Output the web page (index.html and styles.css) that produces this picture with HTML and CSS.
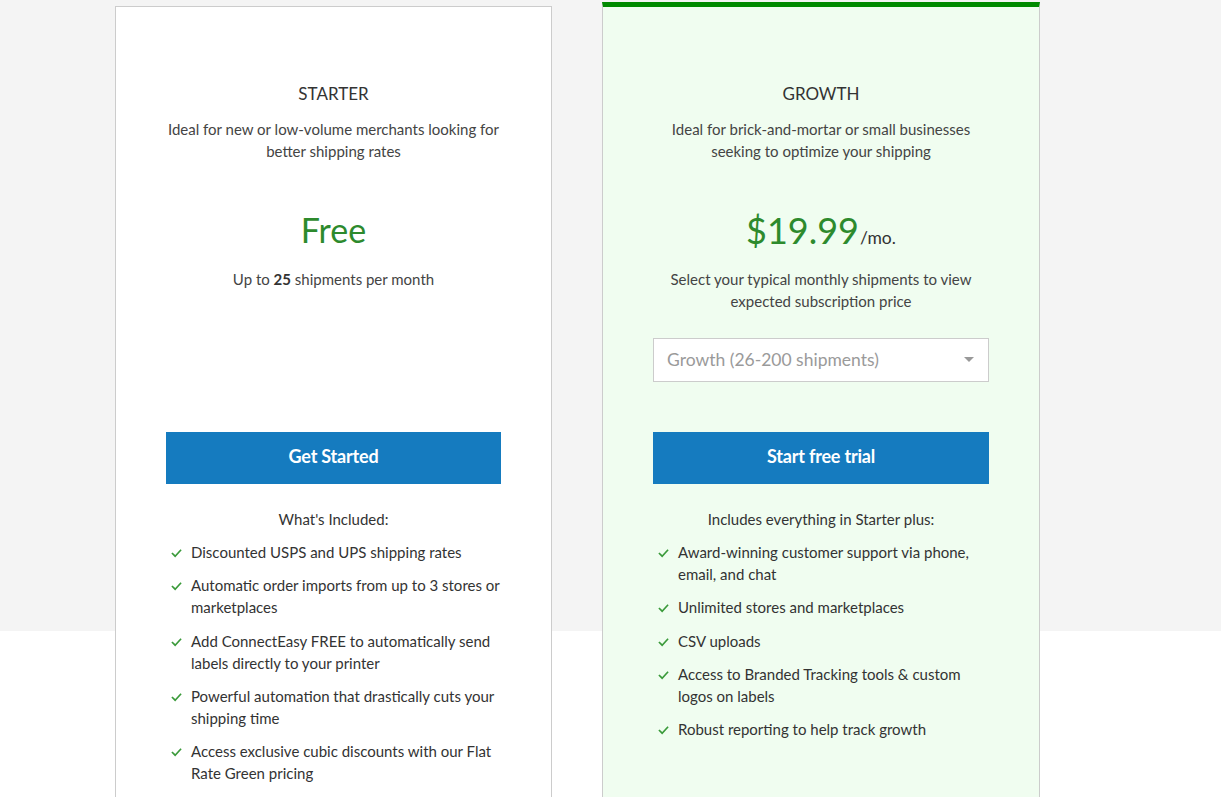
FILE: index.html
```html
<!DOCTYPE html>
<html lang="en">
<head>
<meta charset="utf-8">
<title>Pricing</title>
<link rel="stylesheet" href="styles.css">
</head>
<body>
<section class="pricing">
  <div class="cards">
    <article class="card">
      <div class="plan-top">
        <h2 class="plan-name">STARTER</h2>
        <p class="plan-desc">Ideal for new or low-volume merchants looking for better shipping rates</p>
        <div class="price"><span class="amount">Free</span></div>
        <p class="plan-note">Up to <strong>25</strong> shipments per month</p>
      </div>
      <a class="btn" href="#">Get Started</a>
      <p class="included">What's Included:</p>
      <ul class="features">
        <li><svg class="check" viewBox="0 0 12 10"><polyline points="1,5 4.5,8.5 11,1.5"/></svg><span>Discounted USPS and UPS shipping rates</span></li>
        <li><svg class="check" viewBox="0 0 12 10"><polyline points="1,5 4.5,8.5 11,1.5"/></svg><span>Automatic order imports from up to 3 stores or marketplaces</span></li>
        <li><svg class="check" viewBox="0 0 12 10"><polyline points="1,5 4.5,8.5 11,1.5"/></svg><span>Add ConnectEasy FREE to automatically send labels directly to your printer</span></li>
        <li><svg class="check" viewBox="0 0 12 10"><polyline points="1,5 4.5,8.5 11,1.5"/></svg><span>Powerful automation that drastically cuts your shipping time</span></li>
        <li><svg class="check" viewBox="0 0 12 10"><polyline points="1,5 4.5,8.5 11,1.5"/></svg><span>Access exclusive cubic discounts with our Flat Rate Green pricing</span></li>
      </ul>
    </article>
    <article class="card card-featured">
      <div class="plan-top">
        <h2 class="plan-name">GROWTH</h2>
        <p class="plan-desc">Ideal for brick-and-mortar or small businesses seeking to optimize your shipping</p>
        <div class="price"><span class="amount amount-big">$19.99</span><span class="per">/mo.</span></div>
        <p class="plan-note">Select your typical monthly shipments to view expected subscription price</p>
        <div class="select">
          <span class="select-value">Growth (26-200 shipments)</span>
          <span class="caret"></span>
        </div>
      </div>
      <a class="btn" href="#">Start free trial</a>
      <p class="included">Includes everything in Starter plus:</p>
      <ul class="features">
        <li><svg class="check" viewBox="0 0 12 10"><polyline points="1,5 4.5,8.5 11,1.5"/></svg><span>Award-winning customer support via phone, email, and chat</span></li>
        <li><svg class="check" viewBox="0 0 12 10"><polyline points="1,5 4.5,8.5 11,1.5"/></svg><span>Unlimited stores and marketplaces</span></li>
        <li><svg class="check" viewBox="0 0 12 10"><polyline points="1,5 4.5,8.5 11,1.5"/></svg><span>CSV uploads</span></li>
        <li><svg class="check" viewBox="0 0 12 10"><polyline points="1,5 4.5,8.5 11,1.5"/></svg><span>Access to Branded Tracking tools &amp; custom logos on labels</span></li>
        <li><svg class="check" viewBox="0 0 12 10"><polyline points="1,5 4.5,8.5 11,1.5"/></svg><span>Robust reporting to help track growth</span></li>
      </ul>
    </article>
  </div>
</section>
</body>
</html>
```

FILE: styles.css
```css
* { box-sizing: border-box; }

html, body {
  margin: 0;
  padding: 0;
  background: #ffffff;
  font-family: Lato, "Open Sans", "Liberation Sans", sans-serif;
  color: #333333;
  overflow: hidden;
}

.pricing {
  height: 797px;
  background: linear-gradient(to bottom, #f4f4f4 0, #f4f4f4 631px, #ffffff 631px);
  padding-top: 6px;
}

.cards {
  display: flex;
  gap: 50px;
  padding-left: 115px;
  align-items: flex-start;
}

.card {
  width: 437px;
  min-height: 820px;
  background: #ffffff;
  border: 1px solid #cccccc;
  padding: 0 50px;
  text-align: center;
}

.card-featured {
  width: 438px;
  background: #f0fdf0;
  border-top: 5px solid #008a00;
  margin-top: -4px;
}

.plan-top {
  height: 425px;
  padding-top: 75px;
}

.plan-name {
  margin: 0;
  font-size: 17px;
  line-height: 24px;
  font-weight: 400;
  color: #333333;
}

.plan-desc {
  margin: 12px 0 0;
  font-size: 15px;
  line-height: 22px;
  color: #444444;
}

.price {
  margin-top: 48px;
  height: 40px;
  display: flex;
  justify-content: center;
  align-items: baseline;
}

.amount {
  font-size: 34px;
  line-height: 40px;
  color: #2d8a2d;
}

.amount-big {
  font-size: 36px;
}

.per {
  font-size: 17.5px;
  color: #333333;
  margin-left: 1px;
}

.plan-note {
  margin: 18px 0 0;
  font-size: 15px;
  line-height: 22px;
  color: #444444;
}

.plan-note strong {
  font-weight: 700;
  color: #333333;
}

.select {
  margin-top: 26px;
  height: 44px;
  background: #ffffff;
  border: 1px solid #cccccc;
  display: flex;
  align-items: center;
  justify-content: space-between;
  padding: 0 14px 1px 13px;
}

.select-value {
  font-size: 17.5px;
  color: #9a9a9a;
}

.caret {
  width: 0;
  height: 0;
  border-left: 5px solid transparent;
  border-right: 5px solid transparent;
  border-top: 5px solid #999999;
}

.btn {
  display: flex;
  align-items: center;
  justify-content: center;
  height: 52px;
  padding-bottom: 4px;
  background: #157bbf;
  color: #ffffff;
  font-size: 18px;
  font-weight: 700;
  letter-spacing: -0.2px;
  text-decoration: none;
}

.included {
  margin: 24px 0 0;
  font-size: 15px;
  line-height: 22px;
  color: #333333;
}

.features {
  list-style: none;
  margin: 11px 0 0;
  padding: 0;
  text-align: left;
}

.features li {
  display: flex;
  align-items: flex-start;
  gap: 9px;
  font-size: 15px;
  line-height: 22px;
  color: #333333;
  margin-bottom: 11.3px;
}

.check {
  flex: none;
  width: 11px;
  height: 10px;
  margin: 7px 0 0 5px;
  fill: none;
  stroke: #3a9a3a;
  stroke-width: 1.8;
}
```
